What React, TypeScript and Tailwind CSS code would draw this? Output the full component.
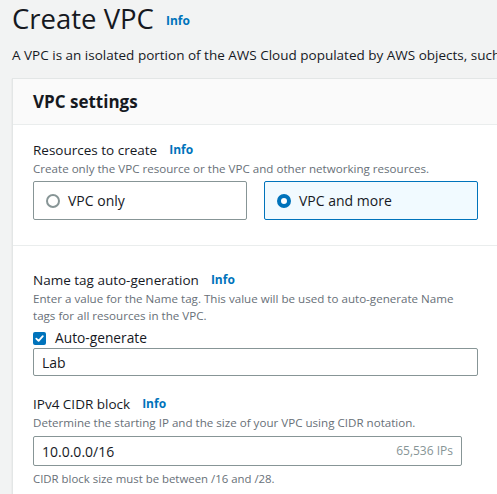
import React from 'react';

const InfoLink = ({ className = '' }: { className?: string }) => (
  <a className={`text-[12px] font-bold text-[#0073bb] leading-none ${className}`}>Info</a>
);

export default function App() {
  return (
    <div className="h-[494px] w-[497px] overflow-hidden bg-[#f2f3f3] text-[#16191f] font-['Open_Sans',sans-serif]">
      {/* Header */}
      <div className="pl-3 pt-[1px] flex items-center h-[36px]">
        <h1 className="text-[27.5px] leading-[36px] font-normal">Create VPC</h1>
        <InfoLink className="ml-3 mt-1" />
      </div>
      <p className="pl-3 mt-[9px] text-[13.5px] leading-[20px] whitespace-nowrap">
        A VPC is an isolated portion of the AWS Cloud populated by AWS objects, such as Amazon EC2 instances.
      </p>

      {/* Card */}
      <div className="ml-3 mt-[13px] w-[520px] bg-white border border-[#e3e6e6] shadow-[0_1px_1px_0_rgba(0,28,36,0.15)]">
        <div className="h-[46px] flex items-center pl-5 bg-[#fafafa] border-b border-[#eaeded]">
          <h2 className="text-[17px] font-bold leading-[22px] mt-px">VPC settings</h2>
        </div>

        {/* Resources */}
        <div className="pl-5 pt-[15px] pb-[25px] border-b border-[#eaeded]">
          <div className="flex items-center h-[20px]">
            <span className="text-[13.5px] leading-[20px]">Resources to create</span>
            <InfoLink className="ml-3" />
          </div>
          <p className="mt-px text-[11.6px] leading-[16px] text-[#687078] whitespace-nowrap">
            Create only the VPC resource or the VPC and other networking resources.
          </p>
          <div className="mt-1 flex gap-[17px]">
            <div className="w-[214px] h-[39px] flex items-center px-3 border border-[#879596] rounded-[2px] bg-white">
              <span className="w-[14px] h-[14px] rounded-full border-2 border-[#879596] bg-white" />
              <span className="ml-[8px] text-[14px]">VPC only</span>
            </div>
            <div className="w-[214px] h-[39px] flex items-center px-3 border border-[#0073bb] rounded-[2px] bg-[#f1faff]">
              <span className="w-[14px] h-[14px] rounded-full border-[4px] border-[#0073bb] bg-white" />
              <span className="ml-[8px] text-[14px]">VPC and more</span>
            </div>
          </div>
        </div>

        {/* Name tag */}
        <div className="pl-5 pt-[24px] pb-6">
          <div className="flex items-center h-[20px]">
            <span className="text-[13.5px] leading-[20px]">Name tag auto-generation</span>
            <InfoLink className="ml-3" />
          </div>
          <p className="w-[445px] text-[11.6px] leading-[17px] text-[#687078]">
            Enter a value for the Name tag. This value will be used to auto-generate Name tags for all resources in the VPC.
          </p>
          <div className="mt-[6px] h-[16px] flex items-center">
            <span className="w-[13px] h-[13px] rounded-[2px] bg-[#0073bb] flex items-center justify-center">
              <svg width="11" height="11" viewBox="0 0 12 12" fill="none">
                <path d="M2.5 6.2 L5 8.6 L9.6 3.4" stroke="white" strokeWidth="2" strokeLinecap="round" strokeLinejoin="round" />
              </svg>
            </span>
            <span className="ml-[9px] text-[13.75px] leading-[16px]">Auto-generate</span>
          </div>
          <div className="mt-0.5 w-[445px] h-[28px] flex items-center px-2 border border-[#879596] rounded-[2px] text-[14px]">
            Lab
          </div>

          {/* CIDR */}
          <div className="mt-[18px] flex items-center h-[20px]">
            <span className="text-[13.5px] leading-[20px]">IPv4 CIDR block</span>
            <InfoLink className="ml-3" />
          </div>
          <p className="mt-px text-[11.6px] leading-[16px] text-[#687078] whitespace-nowrap">
            Determine the starting IP and the size of your VPC using CIDR notation.
          </p>
          <div className="mt-[5px] w-[429px] h-[30px] flex items-center justify-between px-2 border border-[#879596] rounded-[2px]">
            <span className="text-[14px]">10.0.0.0/16</span>
            <span className="text-[12px] text-[#879596]">65,536 IPs</span>
          </div>
          <p className="mt-[5px] text-[11.4px] leading-[16px] text-[#687078]">
            CIDR block size must be between /16 and /28.
          </p>
        </div>
      </div>
    </div>
  );
}
